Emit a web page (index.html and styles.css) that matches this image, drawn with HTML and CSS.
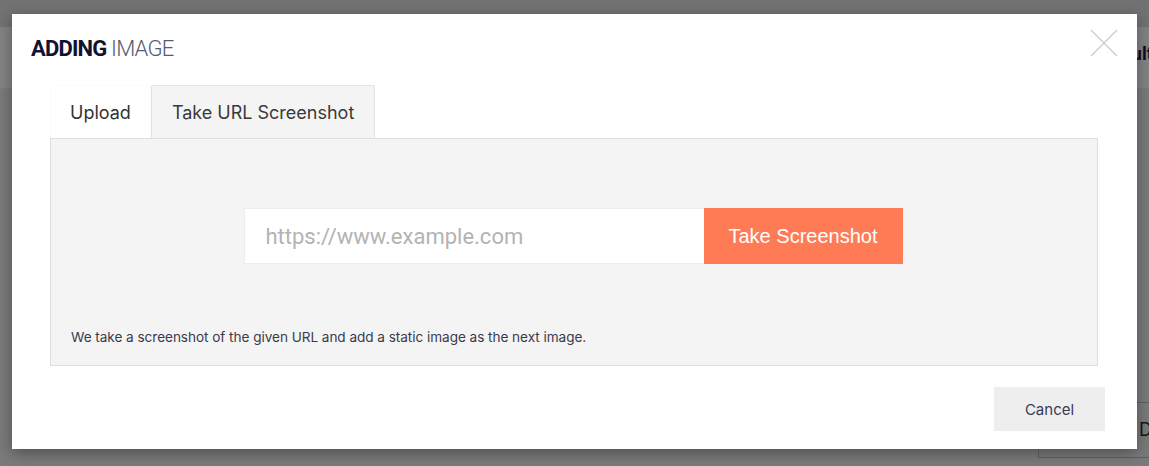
FILE: index.html
```html
<!DOCTYPE html>
<html>
<head>
<meta charset="utf-8">
<link rel="stylesheet" href="styles.css">
</head>
<body>
<div class="app">
  <div class="app-top"></div>
  <div class="app-header"><span class="app-title">Results</span></div>
  <div class="app-body">
    <div class="app-btn">Done</div>
  </div>
</div>
<div class="modal">
  <div class="modal-head">
    <h1 class="modal-title"><b>ADDING</b> IMAGE</h1>
    <button class="close" aria-label="Close">
      <svg width="28" height="28" viewBox="0 0 28 28"><path d="M1 1L27 27M27 1L1 27" stroke="#d2d2d2" stroke-width="1.6" fill="none"/></svg>
    </button>
  </div>
  <div class="tabs">
    <div class="tab">Upload</div>
    <div class="tab active">Take URL Screenshot</div>
  </div>
  <div class="panel">
    <div class="url-row">
      <input class="url-input" type="text" placeholder="https://www.example.com">
      <button class="shot-btn">Take Screenshot</button>
    </div>
    <p class="note">We take a screenshot of the given URL and add a static image as the next image.</p>
  </div>
  <div class="modal-foot">
    <button class="cancel">Cancel</button>
  </div>
</div>
</body>
</html>
```
FILE: styles.css
```css
html, body {
  margin: 0;
  padding: 0;
}
body {
  width: 1149px;
  height: 466px;
  overflow: hidden;
  position: relative;
  font-family: Inter, Roboto, "Liberation Sans", sans-serif;
  background: #7a7a7a;
}
.app {
  height: 466px;
  display: flex;
  flex-direction: column;
}
.app-top {
  height: 27px;
  background: #727272;
}
.app-header {
  height: 61px;
  background: #838383;
  border-bottom: 1px solid #7d7d7d;
  display: flex;
  align-items: center;
  justify-content: flex-end;
  overflow: hidden;
}
.app-title {
  font-family: Roboto, sans-serif;
  font-weight: 700;
  font-size: 18px;
  color: #0c0c2a;
  margin-right: -13px;
  margin-top: -8px;
  white-space: nowrap;
  flex-shrink: 0;
}
.app-body {
  flex: 1;
  display: flex;
  justify-content: flex-end;
  align-items: flex-end;
  overflow: hidden;
}
.app-btn {
  width: 150px;
  height: 56px;
  margin-right: -39px;
  margin-bottom: 8px;
  border: 1px solid #5f5f5f;
  color: #151515;
  font-size: 18px;
  line-height: 54px;
  padding-left: 100px;
  box-sizing: border-box;
  flex-shrink: 0;
}
.modal {
  position: absolute;
  left: 12px;
  top: 14px;
  width: 1125px;
  height: 435px;
  background: #fff;
  box-shadow: 0 4px 14px rgba(0, 0, 0, 0.35);
  box-sizing: border-box;
  padding: 0 32px 0 38px;
  display: flex;
  flex-direction: column;
}
.modal-head {
  display: flex;
  justify-content: space-between;
  align-items: flex-start;
  height: 71px;
  margin-left: -19px;
}
.modal-title {
  margin: 21px 0 0 0;
  font-family: Roboto, sans-serif;
  font-size: 22px;
  line-height: 28px;
  font-weight: 300;
  color: #575a70;
  letter-spacing: -0.8px;
}
.modal-title b {
  font-weight: 700;
  color: #121230;
}
.close {
  margin: 15px -13px 0 0;
  padding: 0;
  border: 0;
  background: none;
  width: 28px;
  height: 28px;
}
.tabs {
  display: flex;
  height: 53px;
}
.tab {
  padding: 0 19px;
  font-size: 18px;
  line-height: 53px;
  color: #333;
  border: 1px solid #fbfbfb;
  border-bottom: 0;
}
.tab.active {
  background: #f4f4f4;
  border-color: #e2e2e2;
  color: #3a3a3a;
  padding: 0 20px;
  border-radius: 2px 2px 0 0;
}
.panel {
  width: 1048px;
  height: 228px;
  box-sizing: border-box;
  background: #f4f4f4;
  border: 1px solid #dedede;
  display: flex;
  flex-direction: column;
  align-items: center;
}
.url-row {
  display: flex;
  margin-top: 69px;
  margin-right: 2px;
}
.url-input {
  width: 460px;
  height: 56px;
  box-sizing: border-box;
  border: 1px solid #ececec;
  border-right: 0;
  background: #fff;
  padding: 0 21px;
  font-family: Roboto, sans-serif;
  font-size: 22px;
  color: #555;
  outline: none;
}
.url-input::placeholder {
  color: #b3b3b3;
}
.shot-btn {
  width: 199px;
  height: 56px;
  border: 0;
  background: #ff7b55;
  color: #fff;
  font-family: "Liberation Sans", Arial, sans-serif;
  font-size: 20px;
  padding: 0;
}
.note {
  align-self: flex-start;
  margin: 65px 0 0 20px;
  font-size: 13.6px;
  line-height: 16px;
  color: #3a3a4c;
  letter-spacing: -0.05px;
}
.modal-foot {
  display: flex;
  justify-content: flex-end;
  margin-top: 21px;
}
.cancel {
  width: 111px;
  height: 44px;
  border: 0;
  background: #eeeeee;
  font-family: Inter, Roboto, sans-serif;
  font-size: 15px;
  color: #3a3a52;
  padding: 0;
}
```
